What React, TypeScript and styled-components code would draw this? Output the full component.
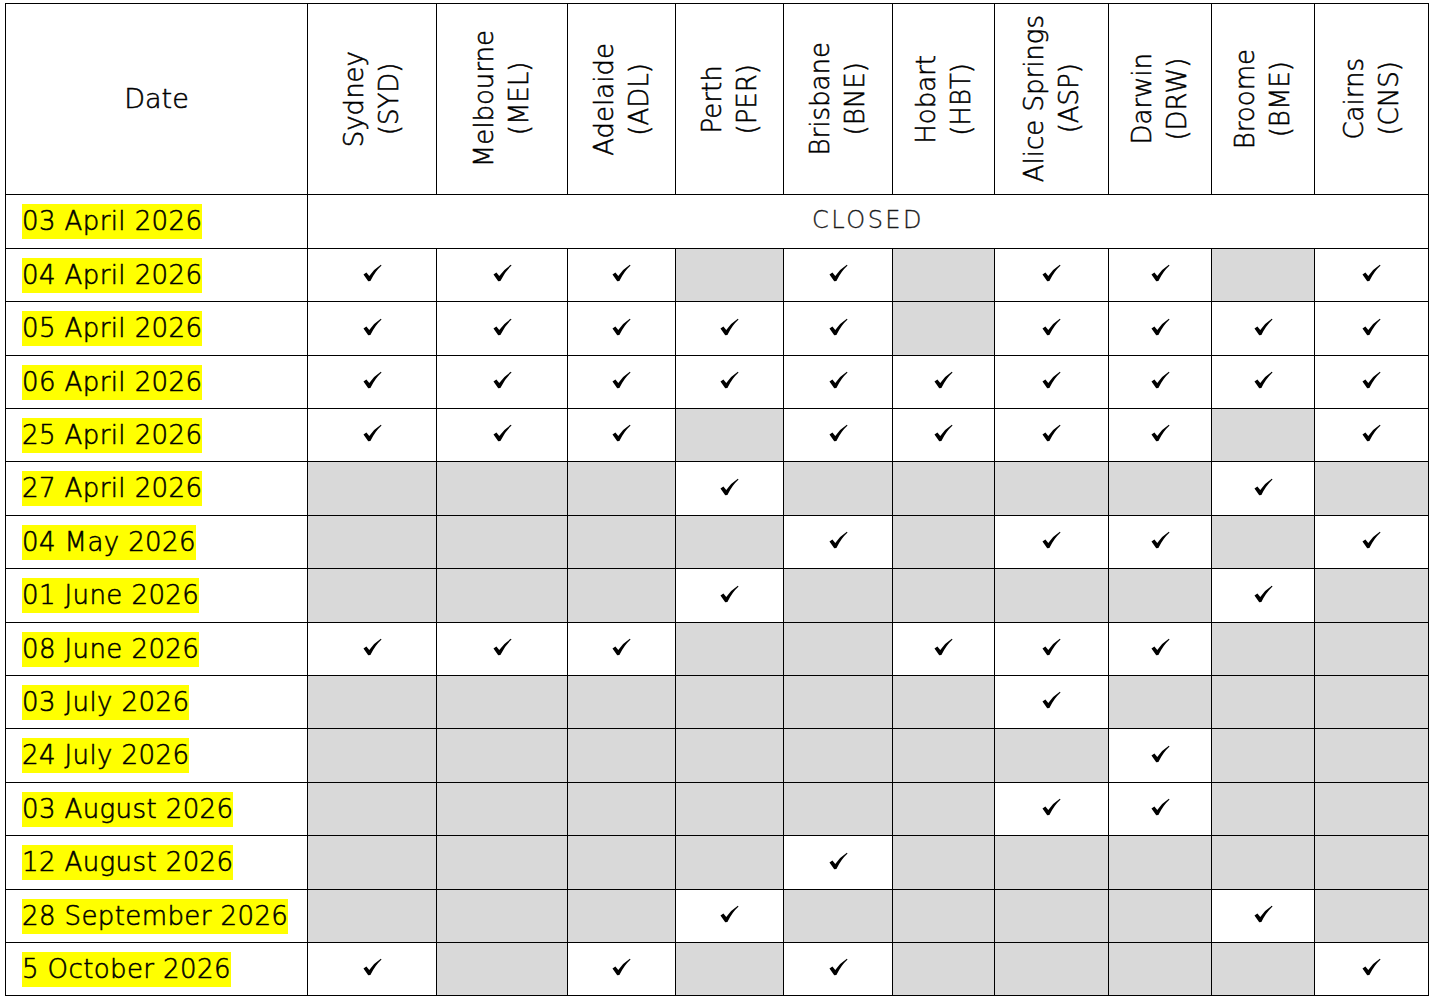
import React from "react";
import styled, { createGlobalStyle } from "styled-components";

const GlobalStyle = createGlobalStyle`
  html, body {
    margin: 0;
    padding: 0;
    background: #ffffff;
  }
  body {
    font-family: "DejaVu Sans", "Liberation Sans", sans-serif;
    font-weight: 300;
    color: #000000;
    -webkit-text-stroke: 0.55px #000000;
  }
`;

// column widths between the 1px grid lines
const columnWidths = [301, 128, 130, 107, 107, 108, 101, 113, 102, 102, 113];
const rowHeights = [190, 53, 52, 53, 52, 52, 53, 52, 53, 52, 52, 53, 52, 53, 52, 52];

const airports = [
  { city: "Sydney", code: "SYD" },
  { city: "Melbourne", code: "MEL" },
  { city: "Adelaide", code: "ADL" },
  { city: "Perth", code: "PER" },
  { city: "Brisbane", code: "BNE" },
  { city: "Hobart", code: "HBT" },
  { city: "Alice Springs", code: "ASP" },
  { city: "Darwin", code: "DRW" },
  { city: "Broome", code: "BME" },
  { city: "Cairns", code: "CNS" },
];

// 1 = open (tick), 0 = not a holiday there (shaded)
const holidays = [
  { date: "04 April 2026", open: [1, 1, 1, 0, 1, 0, 1, 1, 0, 1] },
  { date: "05 April 2026", open: [1, 1, 1, 1, 1, 0, 1, 1, 1, 1] },
  { date: "06 April 2026", open: [1, 1, 1, 1, 1, 1, 1, 1, 1, 1] },
  { date: "25 April 2026", open: [1, 1, 1, 0, 1, 1, 1, 1, 0, 1] },
  { date: "27 April 2026", open: [0, 0, 0, 1, 0, 0, 0, 0, 1, 0] },
  { date: "04 May 2026", open: [0, 0, 0, 0, 1, 0, 1, 1, 0, 1] },
  { date: "01 June 2026", open: [0, 0, 0, 1, 0, 0, 0, 0, 1, 0] },
  { date: "08 June 2026", open: [1, 1, 1, 0, 0, 1, 1, 1, 0, 0] },
  { date: "03 July 2026", open: [0, 0, 0, 0, 0, 0, 1, 0, 0, 0] },
  { date: "24 July 2026", open: [0, 0, 0, 0, 0, 0, 0, 1, 0, 0] },
  { date: "03 August 2026", open: [0, 0, 0, 0, 0, 0, 1, 1, 0, 0] },
  { date: "12 August 2026", open: [0, 0, 0, 0, 1, 0, 0, 0, 0, 0] },
  { date: "28 September 2026", open: [0, 0, 0, 1, 0, 0, 0, 0, 1, 0] },
  { date: "5 October 2026", open: [1, 0, 1, 0, 1, 0, 0, 0, 0, 1] },
];

function Tick() {
  return (
    <TickIcon viewBox="0 0 20 18" aria-label="open">
      <path d="M0.5 10.6 L3.6 8.4 L6.6 12.2 Q11.4 5 18.8 0.4 L19.5 1.1 Q12.6 7.4 7.8 17.4 L5.5 17.8 Z" />
    </TickIcon>
  );
}

export default function App() {
  return (
    <Page>
      <GlobalStyle />
      <Grid>
        <DateHeader>Date</DateHeader>
        {airports.map((a) => (
          <AirportHeader key={a.code}>
            <Rotated>
              {a.city}
              <br />({a.code})
            </Rotated>
          </AirportHeader>
        ))}

        <DateCell>
          <Highlight>03 April 2026</Highlight>
        </DateCell>
        <ClosedCell>CLOSED</ClosedCell>

        {holidays.map((row) => (
          <React.Fragment key={row.date}>
            <DateCell>
              <Highlight>{row.date}</Highlight>
            </DateCell>
            {row.open.map((isOpen, i) => (
              <Cell key={i} $shaded={!isOpen}>
                {isOpen ? <Tick /> : null}
              </Cell>
            ))}
          </React.Fragment>
        ))}
      </Grid>
    </Page>
  );
}

const Page = styled.div`
  padding: 3px 0 0 5px;
`;

const Grid = styled.div`
  display: grid;
  width: fit-content;
  grid-template-columns: ${columnWidths.map((w) => `${w}px`).join(" ")};
  grid-template-rows: ${rowHeights.map((h) => `${h}px`).join(" ")};
  gap: 1px;
  padding: 1px;
  background: #000000;
`;

const Cell = styled.div<{ $shaded?: boolean }>`
  background: ${({ $shaded }) => ($shaded ? "#d9d9d9" : "#ffffff")};
  display: flex;
  align-items: center;
  justify-content: center;
  padding-bottom: 4px;
  box-sizing: border-box;
`;

const DateHeader = styled.div`
  background: #ffffff;
  display: flex;
  align-items: center;
  justify-content: center;
  font-size: 27px;
  padding-bottom: 1px;
  box-sizing: border-box;
`;

const AirportHeader = styled.div`
  background: #ffffff;
  display: flex;
  align-items: center;
  justify-content: center;
  overflow: hidden;
`;

const Rotated = styled.div`
  writing-mode: vertical-rl;
  transform: rotate(180deg);
  text-align: center;
  font-size: 26px;
  line-height: 35px;
  white-space: nowrap;
`;

const DateCell = styled.div`
  background: #ffffff;
  display: flex;
  align-items: center;
  padding-left: 16px;
`;

const Highlight = styled.span`
  display: inline-block;
  background: #ffff00;
  height: 35px;
  line-height: 35px;
  font-size: 26px;
  letter-spacing: 0.4px;
  white-space: nowrap;
`;

const ClosedCell = styled.div`
  grid-column: 2 / -1;
  background: #ffffff;
  display: flex;
  align-items: center;
  justify-content: center;
  font-size: 24px;
  letter-spacing: 2.5px;
  color: #1a1a1a;
  -webkit-text-stroke: 0.3px #1a1a1a;
  padding-bottom: 4px;
  box-sizing: border-box;
`;

const TickIcon = styled.svg`
  width: 19px;
  height: 18px;
  fill: #000000;
  display: block;
`;
